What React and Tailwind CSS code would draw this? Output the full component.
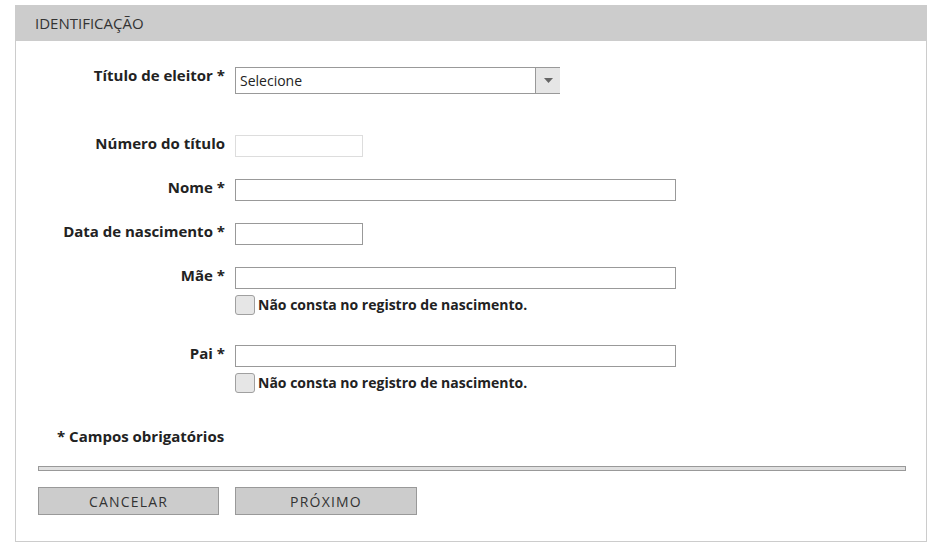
const font = { fontFamily: '"Open Sans", "Noto Sans", sans-serif' };

function Label({ children }) {
  return (
    <div className="text-right text-[15px] leading-[16px] font-bold text-[#222] pr-[1px] whitespace-nowrap">
      {children}
    </div>
  );
}

function TextInput({ width, light }) {
  return (
    <input
      type="text"
      className={
        "block h-[22px] bg-white border outline-none px-1 text-[13px] " +
        (light ? "border-[#ddd] " : "border-[#999] ") +
        width
      }
    />
  );
}

function Checkbox({ label }) {
  return (
    <label className="flex items-center gap-[3px] mt-[6px] cursor-pointer">
      <span className="block w-[20px] h-[20px] rounded-[3px] border border-[#a0a0a0] bg-[#e6e6e6]" />
      <span className="text-[14px] font-bold text-[#222] leading-[18px]">{label}</span>
    </label>
  );
}

export default function App() {
  return (
    <div className="bg-white w-[952px] h-[553px] pt-[5px] pl-[15px]" style={font}>
      <div className="w-[912px] border border-t-0 border-[#ccc]">
        <div className="h-[36px] bg-[#ccc] flex items-center pl-[20px] text-[15px] font-medium text-[#333] -mx-px">
          IDENTIFICAÇÃO
        </div>

        <div className="grid grid-cols-[210px_1fr] gap-x-[9px] pt-[26px]">
          <Label>Título de eleitor *</Label>
          <div className="flex w-[325px] h-[27px] border-y border-l border-[#999] bg-white">
            <div className="flex-1 flex items-center pl-[4px] text-[14px] text-[#222]">Selecione</div>
            <div className="w-[25px] flex items-center justify-center bg-[#e6e6e6] border-l border-[#999]">
              <svg width="9" height="5" viewBox="0 0 9 5">
                <path d="M0 0h9L4.5 5z" fill="#666" />
              </svg>
            </div>
          </div>

          <div className="col-span-2 h-[41px]" />

          <Label>Número do título</Label>
          <TextInput width="w-[128px]" light />

          <div className="col-span-2 h-[22px]" />

          <Label>Nome *</Label>
          <TextInput width="w-[441px]" />

          <div className="col-span-2 h-[22px]" />

          <Label>Data de nascimento *</Label>
          <TextInput width="w-[128px]" />

          <div className="col-span-2 h-[22px]" />

          <Label>Mãe *</Label>
          <div>
            <TextInput width="w-[441px]" />
            <Checkbox label="Não consta no registro de nascimento." />
          </div>

          <div className="col-span-2 h-[30px]" />

          <Label>Pai *</Label>
          <div>
            <TextInput width="w-[441px]" />
            <Checkbox label="Não consta no registro de nascimento." />
          </div>
        </div>

        <div className="pl-[41px] mt-[34px] text-[15px] leading-[18px] font-bold text-[#222]">
          * Campos obrigatórios
        </div>

        <div className="mx-[22px] mt-[21px] mr-[20px] h-[5px] border border-[#999] bg-[#e0e0e0]" />

        <div className="flex gap-[16px] pl-[22px] mt-[16px] pb-[26px]">
          <button className="w-[181px] h-[28px] bg-[#ccc] border border-[#999] text-[14px] text-[#333] tracking-[1.2px]">
            CANCELAR
          </button>
          <button className="w-[182px] h-[28px] bg-[#ccc] border border-[#999] text-[14px] text-[#333] tracking-[1.2px]">
            PRÓXIMO
          </button>
        </div>
      </div>
    </div>
  );
}
